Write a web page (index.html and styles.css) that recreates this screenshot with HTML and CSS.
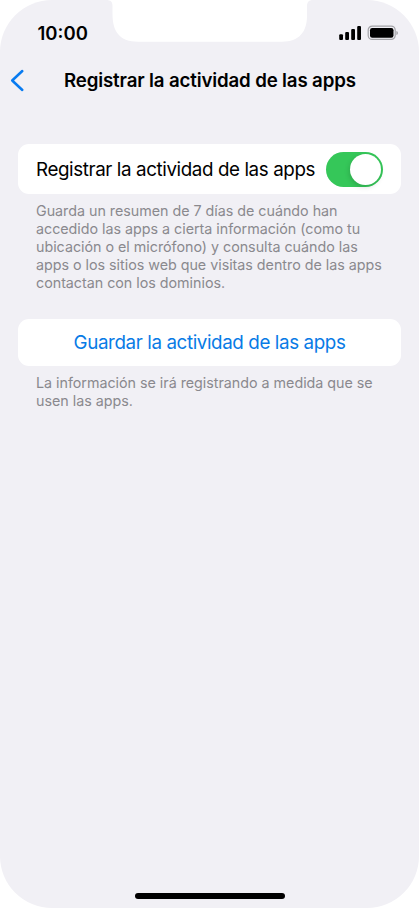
FILE: index.html
```
<!DOCTYPE html>
<html lang="es">
<head>
<meta charset="utf-8">
<meta name="viewport" content="width=device-width">
<title>Registrar la actividad de las apps</title>
<link rel="stylesheet" href="styles.css">
</head>
<body>
<div class="phone">
  <svg class="notch" width="207" height="42" viewBox="0 0 207 42" aria-hidden="true"><path d="M0 0C5 0 6.500 2 6.500 6V14C6.500 32 14 41.700 32 41.700H176C193 41.700 201 32 201 16V6C201 2 203 0 207 0Z" fill="#fff"/></svg>
  <header class="status">
    <span class="time">10:00</span>
    <svg class="indicators" width="60" height="16" viewBox="0 0 60 16" aria-hidden="true">
      <rect x="0.200" y="9.200" width="3.800" height="5.800" rx="1.100"/>
      <rect x="6.200" y="7" width="3.800" height="8" rx="1.100"/>
      <rect x="12.200" y="4" width="3.800" height="11" rx="1.100"/>
      <rect x="18.200" y="1" width="3.800" height="14" rx="1.100"/>
      <rect x="29.200" y="1.100" width="27" height="13.300" rx="4" fill="none" stroke="#a3a3a7" stroke-width="1.200"/>
      <rect x="31" y="3" width="23.500" height="9.800" rx="2.200"/>
      <path d="M57.400 6C59.400 6.600 59.400 9.400 57.400 10Z" fill="#a3a3a7"/>
    </svg>
  </header>
  <nav class="nav">
    <svg class="back" width="15" height="23" viewBox="0 0 15 23" aria-hidden="true"><path d="M12.300 2L2.200 11.500L12.300 21" fill="none" stroke="#087bf0" stroke-width="2.500" stroke-linecap="round" stroke-linejoin="round"/></svg>
    <h1 class="title">Registrar la actividad de las apps</h1>
  </nav>
  <main class="content">
    <section class="row">
      <span class="label">Registrar la actividad de las apps</span>
      <span class="toggle"><span class="knob"></span></span>
    </section>
    <p class="note">Guarda un resumen de 7 días de cuándo han<br>accedido las apps a cierta información (como tu<br>ubicación o el micrófono) y consulta cuándo las<br>apps o los sitios web que visitas dentro de las apps<br>contactan con los dominios.</p>
    <section class="row action">
      <span class="link">Guardar la actividad de las apps</span>
    </section>
    <p class="note">La información se irá registrando a medida que se<br>usen las apps.</p>
  </main>
  <div class="home"></div>
</div>
</body>
</html>
```
FILE: styles.css
```
* { box-sizing: border-box; }
body {
  margin: 0;
  background: #fff;
  font-family: Inter, "Liberation Sans", sans-serif;
  color: #000;
}
.phone {
  position: relative;
  display: flex;
  flex-direction: column;
  width: 419px;
  height: 908px;
  overflow: hidden;
  background: #f1f0f5;
  border-radius: 52px;
}
.notch { position: absolute; top: 0; left: 106px; }
.status {
  display: flex;
  justify-content: space-between;
  height: 58px;
  padding: 22px 20px 0 37.5px;
}
.time {
  font-size: 18.5px;
  line-height: 22px;
  font-weight: 600;
}
.indicators { display: block; margin-top: 3px; }
.nav {
  display: flex;
  align-items: center;
  height: 45px;
  padding-left: 10px;
}
.back { display: block; flex: none; }
.title {
  margin: 0 0 0 39px;
  padding-top: 1px;
  font-size: 18.7px;
  line-height: 24px;
  font-weight: 600;
  letter-spacing: -0.15px;
  white-space: nowrap;
}
.content {
  flex: 1;
  padding: 41px 18px 0;
}
.row {
  display: flex;
  align-items: center;
  justify-content: space-between;
  height: 49.5px;
  padding: 0 18px;
  background: #fff;
  border-radius: 11px;
}
.label, .link {
  padding-top: 2px;
  font-size: 18.8px;
  line-height: 24px;
  letter-spacing: -0.4px;
  white-space: nowrap;
}
.label { padding-top: 3px; }
.toggle {
  display: flex;
  flex: none;
  justify-content: flex-end;
  width: 57px;
  height: 35px;
  margin-top: 1px;
  padding: 2px;
  border-radius: 18px;
  background: #35c759;
}
.knob {
  width: 31px;
  height: 31px;
  border-radius: 50%;
  background: #fff;
  box-shadow: -1px 2px 5px rgba(0, 0, 0, 0.15);
}
.note {
  margin: 8px 18px 27px;
  font-size: 14.3px;
  line-height: 18px;
  letter-spacing: -0.02px;
  color: #8a898e;
  white-space: nowrap;
}
.action { justify-content: center; height: 47.5px; }
.link { color: #087be6; }
.home {
  width: 150px;
  height: 6px;
  margin: 0 auto 9px;
  border-radius: 3px;
  background: #000;
}
```
